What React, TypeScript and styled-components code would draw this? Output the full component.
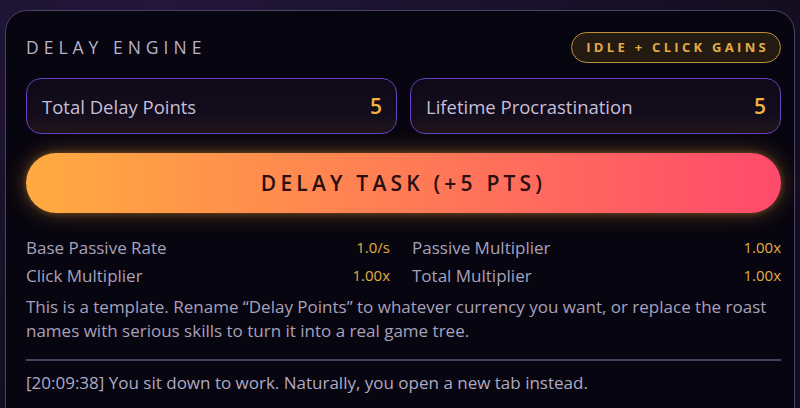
import React from "react";
import styled, { createGlobalStyle } from "styled-components";

const Global = createGlobalStyle`
  html, body { margin: 0; padding: 0; }
  body {
    background: #1a1229;
    font-family: "Open Sans", "Noto Sans", sans-serif;
    width: 800px; height: 408px; overflow: hidden;
  }
`;

const Page = styled.div`
  padding: 10px 5px 0 5px;
  height: 408px;
  box-sizing: border-box;
  background: radial-gradient(ellipse at 20% 0%, #22163a 0%, #140e20 70%);
`;

const Card = styled.section`
  background: #07050f;
  border: 1.5px solid #4a4266;
  border-radius: 22px;
  padding: 20px 13px 20px 20px;
  height: 420px;
  box-sizing: border-box;
  display: flex;
  flex-direction: column;
`;

const Header = styled.div`
  display: flex;
  align-items: center;
  justify-content: space-between;
  height: 32px;
`;

const Title = styled.h2`
  margin: 0;
  font-size: 17.5px;
  font-weight: 500;
  letter-spacing: 5px;
  color: #b9b2c9;
`;

const Badge = styled.span`
  box-sizing: border-box;
  height: 31px;
  display: inline-flex;
  align-items: center;
  border: 1.5px solid #c08d3a;
  background: #231a12;
  color: #e5aa45;
  border-radius: 16px;
  padding: 0 11px 0 14px;
  font-size: 13px;
  font-weight: 700;
  letter-spacing: 3.3px;
`;

const Stats = styled.div`
  display: grid;
  grid-template-columns: 1fr 1fr;
  gap: 13px;
  margin-top: 15px;
`;

const StatBox = styled.div`
  height: 56px;
  box-sizing: border-box;
  border: 1.5px solid #6443bd;
  border-radius: 15px;
  background: linear-gradient(180deg, #0e0918 0%, #130c1c 65%, #20151a 100%);
  display: flex;
  align-items: center;
  justify-content: space-between;
  padding: 0 14px 0 15px;
`;

const StatLabel = styled.span`
  font-size: 18.5px;
  color: #c6bfd6;
`;

const StatValue = styled.span`
  font-size: 21px;
  font-weight: 600;
  color: #f1b340;
`;

const Action = styled.button`
  margin-top: 19px;
  height: 60px;
  border: none;
  border-radius: 30px;
  background: linear-gradient(90deg, #ffab40 0%, #ff7c55 50%, #ff4a6c 100%);
  box-shadow: 0 0 22px rgba(255, 170, 60, 0.35), 0 0 6px rgba(255, 170, 60, 0.3);
  font-family: inherit;
  font-size: 21px;
  font-weight: 600;
  letter-spacing: 4.2px;
  color: #2a0f10;
  cursor: pointer;
`;

const Metrics = styled.div`
  display: grid;
  grid-template-columns: 364px 1fr;
  column-gap: 22px;
  margin-top: 20px;
`;

const Metric = styled.div`
  display: flex;
  justify-content: space-between;
  align-items: center;
  height: 28px;
  font-size: 17px;
`;

const MetricLabel = styled.span`
  color: #a8a1bb;
`;

const MetricValue = styled.span`
  color: #e3ad45;
  font-size: 15px;
`;

const Note = styled.p`
  margin: 6px 0 0 0;
  font-size: 17px;
  line-height: 24px;
  color: #a8a1bb;
`;

const Divider = styled.hr`
  border: none;
  height: 1.5px;
  background: #48425c;
  margin: 16px 0 0 0;
`;

const Log = styled.div`
  margin-top: 10px;
  font-size: 17px;
  line-height: 24px;
  color: #b0a9c3;
`;

const metrics = [
  ["Base Passive Rate", "1.0/s"],
  ["Passive Multiplier", "1.00x"],
  ["Click Multiplier", "1.00x"],
  ["Total Multiplier", "1.00x"],
];

export default function App() {
  return (
    <>
      <Global />
      <Page>
        <Card>
          <Header>
            <Title>DELAY ENGINE</Title>
            <Badge>IDLE + CLICK GAINS</Badge>
          </Header>
          <Stats>
            <StatBox>
              <StatLabel>Total Delay Points</StatLabel>
              <StatValue>5</StatValue>
            </StatBox>
            <StatBox>
              <StatLabel>Lifetime Procrastination</StatLabel>
              <StatValue>5</StatValue>
            </StatBox>
          </Stats>
          <Action>DELAY TASK (+5 PTS)</Action>
          <Metrics>
            {metrics.map(([l, v]) => (
              <Metric key={l}>
                <MetricLabel>{l}</MetricLabel>
                <MetricValue>{v}</MetricValue>
              </Metric>
            ))}
          </Metrics>
          <Note>
            This is a template. Rename “Delay Points” to whatever currency you want, or replace the roast
            names with serious skills to turn it into a real game tree.
          </Note>
          <Divider />
          <Log>[20:09:38] You sit down to work. Naturally, you open a new tab instead.</Log>
        </Card>
      </Page>
    </>
  );
}
